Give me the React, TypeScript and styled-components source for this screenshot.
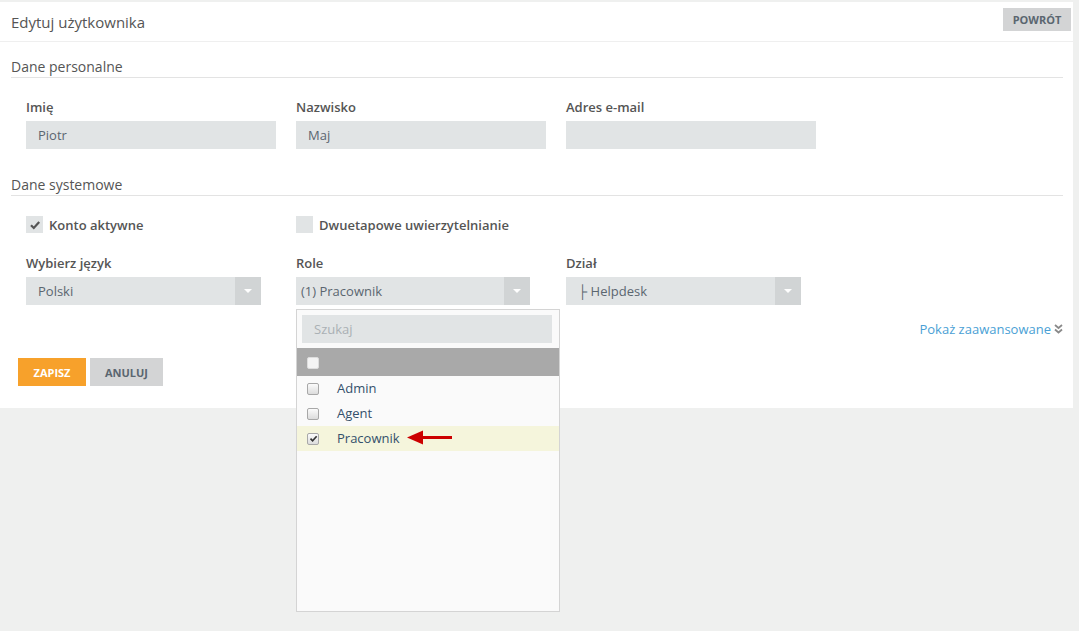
import React from "react";
import styled, { createGlobalStyle } from "styled-components";

const GlobalStyle = createGlobalStyle`
  html, body, #root { height: 100%; }
  body {
    margin: 0;
    background: #eff0ef;
    font-family: "Open Sans", "Noto Sans", sans-serif;
    color: #555;
  }
  * { box-sizing: border-box; }
`;

const Page = styled.div`
  min-height: 100%;
  padding: 2px 6px 0 0;
  background: #eff0ef;
`;

const Panel = styled.div`
  background: #fff;
  height: 406px;
`;

const Header = styled.div`
  display: flex;
  justify-content: space-between;
  align-items: flex-start;
  height: 40px;
  border-bottom: 1px solid #efefef;
  padding: 0 2px 0 11px;
`;

const Title = styled.h1`
  margin: 10px 0 0;
  font-size: 15px;
  font-weight: 400;
  color: #555;
`;

const Button = styled.button<{ $primary?: boolean; $w: number }>`
  width: ${(p) => p.$w}px;
  height: ${(p) => (p.$primary !== undefined ? 28 : 23)}px;
  border: none;
  padding: 0;
  font-family: inherit;
  font-size: 11px;
  font-weight: 700;
  background: ${(p) => (p.$primary ? "#f7a12b" : "#d3d4d5")};
  color: ${(p) => (p.$primary ? "#fff" : "#5a6670")};
  cursor: pointer;
`;

const BackButton = styled(Button)`
  margin-top: 6px;
`;

const Body = styled.div`
  padding: 0 10px 0 11px;
`;

const SectionTitle = styled.div<{ $top: number }>`
  margin-top: ${(p) => p.$top}px;
  font-size: 14px;
  line-height: 19px;
  padding-bottom: 1px;
  border-bottom: 1px solid #e3e3e3;
  color: #555;
`;

const Grid = styled.div<{ $top: number }>`
  display: grid;
  grid-template-columns: repeat(3, 250px);
  column-gap: 20px;
  padding-left: 15px;
  margin-top: ${(p) => p.$top}px;
`;

const Field = styled.div`
  position: relative;
`;

const Label = styled.div`
  font-size: 13px;
  font-weight: 600;
  line-height: 18px;
  margin-bottom: 5px;
  color: #555;
`;

const Input = styled.div<{ $w?: number }>`
  width: ${(p) => p.$w ?? 250}px;
  height: 28px;
  background: #e1e4e5;
  font-size: 13px;
  line-height: 28px;
  padding-left: 12px;
  color: #5b6670;
`;

const Select = styled.div<{ $w: number }>`
  display: flex;
  width: ${(p) => p.$w}px;
  height: 28px;
  background: #e1e4e5;
  font-size: 13px;
  line-height: 28px;
  color: #5b6670;
`;

const SelectValue = styled.div<{ $pad: number }>`
  flex: 1;
  padding-left: ${(p) => p.$pad}px;
`;

const SelectArrow = styled.div`
  width: 26px;
  background: #d1d4d5;
  display: flex;
  align-items: center;
  justify-content: center;
  &::after {
    content: "";
    border-left: 4px solid transparent;
    border-right: 4px solid transparent;
    border-top: 4px solid #fff;
  }
`;

const CheckRow = styled.label`
  display: flex;
  align-items: center;
  gap: 6px;
  font-size: 13px;
  font-weight: 600;
  color: #555;
  height: 17px;
`;

const CheckBox = styled.span`
  width: 17px;
  height: 17px;
  background: #e1e4e5;
  display: flex;
  align-items: center;
  justify-content: center;
`;

const Dropdown = styled.div`
  position: absolute;
  top: 55px;
  left: 0;
  width: 264px;
  height: 303px;
  background: #fafafa;
  border: 1px solid #d4d4d4;
  padding-top: 5px;
  z-index: 2;
`;

const Search = styled.div`
  margin-left: 5px;
  width: 250px;
  height: 28px;
  background: #e1e4e5;
  color: #aab0b4;
  font-size: 13px;
  line-height: 28px;
  padding-left: 12px;
`;

const ListHead = styled.div`
  margin-top: 5px;
  height: 28px;
  background: #a9a9a9;
  display: flex;
  align-items: center;
  padding-left: 10px;
`;

const Item = styled.div<{ $active?: boolean }>`
  height: 25px;
  display: flex;
  align-items: center;
  padding: 0 0 2px 10px;
  background: ${(p) => (p.$active ? "#f5f5dc" : "transparent")};
  font-size: 13px;
  color: #34506b;
`;

const MiniBox = styled.span<{ $flat?: boolean }>`
  width: 12px;
  height: 12px;
  border-radius: 2px;
  border: 1px solid ${(p) => (p.$flat ? "#ddd" : "#a8a8a8")};
  background: ${(p) => (p.$flat ? "#f4f4f4" : "linear-gradient(#fbfbfb, #dcdcdc)")};
  margin: 2px 18px 0 0;
  display: flex;
  align-items: center;
  justify-content: center;
`;

const Advanced = styled.div`
  display: flex;
  justify-content: flex-end;
  align-items: center;
  gap: 3px;
  margin-top: 15px;
  font-size: 13px;
  color: #4a9fd5;
  line-height: 18px;
`;

const Actions = styled.div`
  display: flex;
  gap: 4px;
  margin-top: 20px;
  padding-left: 7px;
`;

const Tick = ({ size, color }: { size: number; color: string }) => (
  <svg width={size} height={size} viewBox="0 0 12 12">
    <path d="M2 6.2 L4.8 9 L10.2 3" fill="none" stroke={color} strokeWidth="2.2" />
  </svg>
);

const RedArrow = () => (
  <svg width="46" height="15" viewBox="0 0 46 15" style={{ marginLeft: 7 }}>
    <path d="M14 6 H45 V9 H14 Z" fill="#cc0000" />
    <path d="M0 7.5 L16 0.5 L16 14.5 Z" fill="#cc0000" />
  </svg>
);

const DoubleChevron = () => (
  <svg width="9" height="10" viewBox="0 0 9 10">
    <path d="M1 1 L4.5 4 L8 1 M1 5.5 L4.5 8.5 L8 5.5" fill="none" stroke="#8a8a8a" strokeWidth="1.8" />
  </svg>
);

const roles = ["Admin", "Agent", "Pracownik"];

export default function App() {
  return (
    <>
      <GlobalStyle />
      <Page>
        <Panel>
          <Header>
            <Title>Edytuj użytkownika</Title>
            <BackButton $w={68}>POWRÓT</BackButton>
          </Header>
          <Body>
            <SectionTitle $top={15}>Dane personalne</SectionTitle>
            <Grid $top={20}>
              <Field>
                <Label>Imię</Label>
                <Input>Piotr</Input>
              </Field>
              <Field>
                <Label>Nazwisko</Label>
                <Input>Maj</Input>
              </Field>
              <Field>
                <Label>Adres e-mail</Label>
                <Input />
              </Field>
            </Grid>

            <SectionTitle $top={26}>Dane systemowe</SectionTitle>
            <Grid $top={20}>
              <CheckRow>
                <CheckBox>
                  <Tick size={12} color="#555" />
                </CheckBox>
                Konto aktywne
              </CheckRow>
              <CheckRow>
                <CheckBox />
                Dwuetapowe uwierzytelnianie
              </CheckRow>
            </Grid>

            <Grid $top={21}>
              <Field>
                <Label>Wybierz język</Label>
                <Select $w={235}>
                  <SelectValue $pad={12}>Polski</SelectValue>
                  <SelectArrow />
                </Select>
              </Field>
              <Field>
                <Label>Role</Label>
                <Select $w={234}>
                  <SelectValue $pad={5}>(1) Pracownik</SelectValue>
                  <SelectArrow />
                </Select>
                <Dropdown>
                  <Search>Szukaj</Search>
                  <ListHead>
                    <MiniBox $flat />
                  </ListHead>
                  {roles.map((r) => (
                    <Item key={r} $active={r === "Pracownik"}>
                      <MiniBox>{r === "Pracownik" && <Tick size={9} color="#333" />}</MiniBox>
                      {r}
                      {r === "Pracownik" && <RedArrow />}
                    </Item>
                  ))}
                </Dropdown>
              </Field>
              <Field>
                <Label>Dział</Label>
                <Select $w={235}>
                  <SelectValue $pad={12}>├ Helpdesk</SelectValue>
                  <SelectArrow />
                </Select>
              </Field>
            </Grid>

            <Advanced>
              Pokaż zaawansowane
              <DoubleChevron />
            </Advanced>

            <Actions>
              <Button $primary $w={68}>ZAPISZ</Button>
              <Button $primary={false} $w={73}>ANULUJ</Button>
            </Actions>
          </Body>
        </Panel>
      </Page>
    </>
  );
}
